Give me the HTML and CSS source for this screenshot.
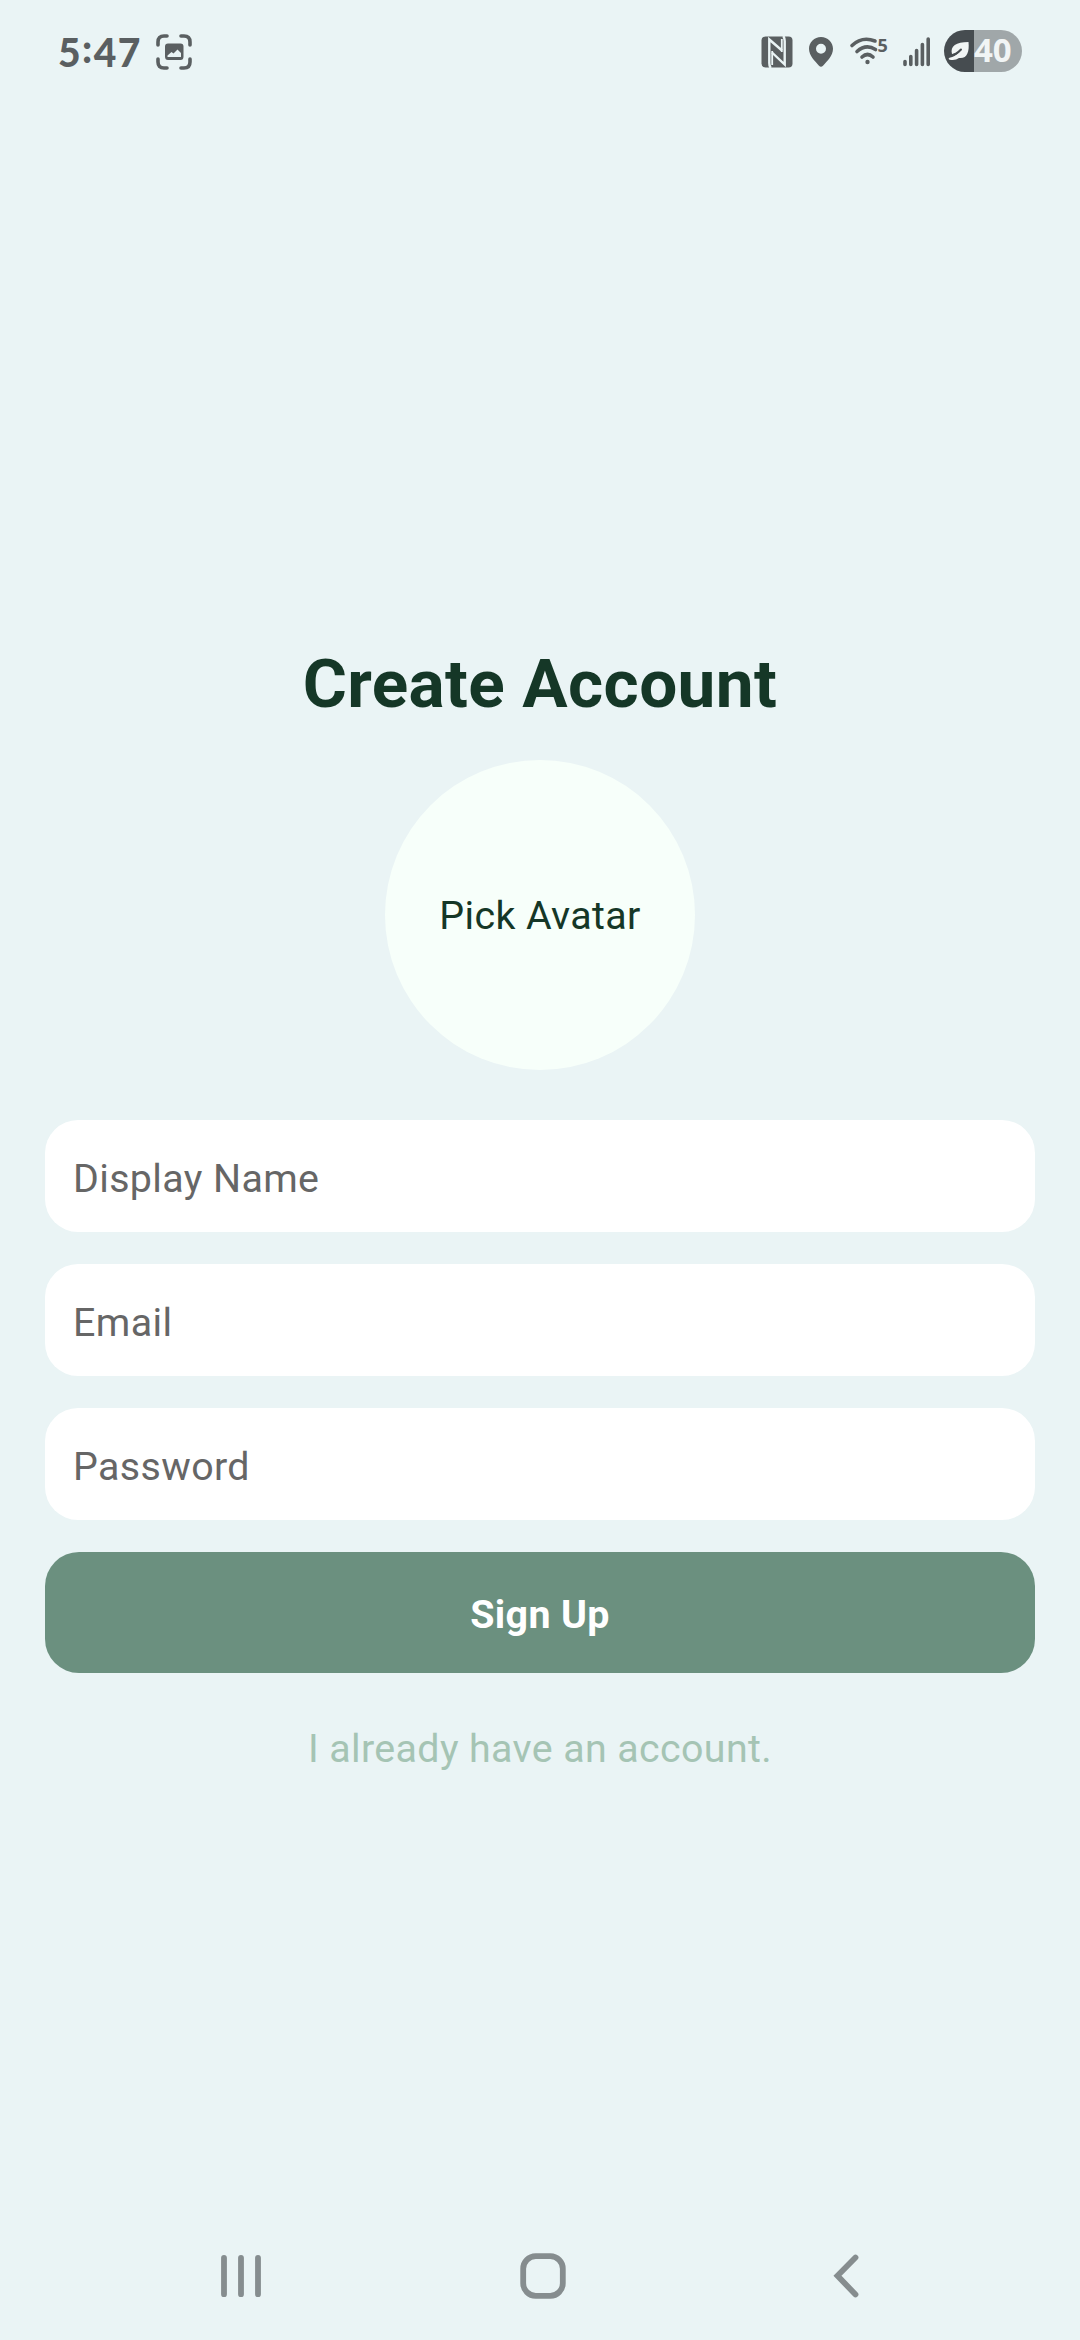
FILE: index.html
```html
<!DOCTYPE html>
<html lang="en">
<head>
<meta charset="utf-8">
<title>Create Account</title>
<link rel="stylesheet" href="styles.css">
</head>
<body>
<div class="screen">
  <header class="status">
    <div class="status-left">
      <span class="time">5<span class="colon">:</span>47</span>
      <svg class="icon-capture" width="36" height="36" viewBox="0 0 36 36">
        <path class="line" d="M2 11V8Q2 2 8 2H11M25 2H28Q34 2 34 8V11M34 25V28Q34 34 28 34H25M11 34H8Q2 34 2 28V25"/>
        <path class="solid" fill-rule="evenodd" d="M12 9.500H24.500Q27.500 9.500 27.500 12.500V22.500Q27.500 26 24.500 26H12Q9 26 9 22.500V12.500Q9 9.500 12 9.500ZM11.500 23H25V19L21.500 15.500L17.500 19.500L15.500 18L11.500 21.500Z"/>
      </svg>
    </div>
    <div class="status-right">
      <svg width="32" height="32" viewBox="0 0 32 32">
        <rect class="solid" x="0.500" y="0.500" width="31" height="31" rx="4"/>
        <path class="cut" d="M9.700 32Q8.300 30 8.300 27V3.500L21 14.500M22.300 0Q23.700 2 23.700 5V28.500L11 16.500"/>
        <path class="cut cut-thin" d="M11.200 29V15M20.800 3V16"/>
      </svg>
      <svg width="24" height="30" viewBox="0 0 24 30">
        <path class="solid" fill-rule="evenodd" d="M12 0C5.300 0 0 5.200 0 11.800C0 19 6 24 10 28.800Q12 30.600 14 28.800C18 24 24 19 24 11.800C24 5.200 18.700 0 12 0ZM12 6.700A5 5 0 1 1 12 16.700A5 5 0 1 1 12 6.700Z"/>
      </svg>
      <svg class="icon-wifi" width="40" height="30" viewBox="0 0 40 30">
        <path class="line" d="M2 8.500Q12 -1 25 4M7 14.500Q16 6.500 25.500 12.500M12 20Q17.500 15 23 20"/>
        <circle class="solid" cx="17.500" cy="25" r="2.200"/>
        <text class="wifi-gen" x="27.500" y="15">5</text>
      </svg>
      <svg class="icon-signal" width="28" height="30" viewBox="0 0 28 30">
        <path class="bars" d="M2 24.500V27.500M7.800 19.500V27.500M13.600 13.500V27.500M19.400 7.500V27.500M25.200 2V27.500"/>
      </svg>
      <div class="battery">
        <svg class="leaf" width="22" height="20" viewBox="0 0 22 20">
          <path class="leaf-fill" d="M4 13C2 5 8 1 20.500 1C21.500 11 19 18 11 17Q7 20 1 18.500Q0 17.500 1.500 16.800Q7 16 12 10Q8 13 4 13Z"/>
          <path class="leaf-vein" d="M2.500 14.500Q8 14 13 8.500"/>
        </svg>
        <span class="level">40</span>
      </div>
    </div>
  </header>

  <main class="signup">
    <h1 class="title">Create Account</h1>
    <button class="avatar" type="button">Pick Avatar</button>
    <form class="form">
      <input class="field" type="text" placeholder="Display Name" aria-label="Display Name">
      <input class="field" type="email" placeholder="Email" aria-label="Email">
      <input class="field" type="password" placeholder="Password" aria-label="Password">
      <button class="submit" type="button">Sign Up</button>
    </form>
    <a class="login-link">I already have an account.</a>
  </main>

  <nav class="nav">
    <svg width="42" height="46" viewBox="0 0 42 46"><path class="nav-line" d="M4 4.800V41.200M21 4.800V41.200M38 4.800V41.200"/></svg>
    <svg class="nav-home" width="46" height="46" viewBox="0 0 46 46"><rect class="nav-line" x="3.200" y="3.200" width="39.600" height="39.600" rx="12.500"/></svg>
    <svg class="nav-back" width="26" height="46" viewBox="0 0 26 46"><path class="nav-line" d="M22.500 4.500L4.500 22.800L22.500 41.500"/></svg>
  </nav>
</div>
</body>
</html>
```
FILE: styles.css
```css
* { box-sizing: border-box; }
body { margin: 0; background: #eaf4f5; }
svg { display: block; fill: none; flex: none; }

.screen {
  width: 1080px;
  height: 2340px;
  display: flex;
  flex-direction: column;
  background: #eaf4f5;
  font-family: Roboto, sans-serif;
  font-size: 39.375px;
  letter-spacing: 0.38px;
  overflow: hidden;
}

/* Status bar */
.status {
  height: 104px;
  padding: 0 58px;
  display: flex;
  justify-content: space-between;
}
.status-left, .status-right { height: 103px; display: flex; align-items: center; }
.time {
  width: 98px;
  padding-bottom: 2px;
  font: 900 39px/40px Lato, sans-serif;
  letter-spacing: 1.4px;
  color: #5a5f61;
}
.colon { vertical-align: 4px; line-height: 1; }
.solid { fill: #5a5f61; }
.line { stroke: #5a5f61; stroke-width: 3.6; stroke-linecap: round; }
.cut { stroke: #eaf4f5; stroke-width: 2.4; }
.cut-thin { stroke-width: 1.8; }
.bars { stroke: #5a5f61; stroke-width: 3.6; stroke-linecap: round; }
.wifi-gen { fill: #5a5f61; font: 700 18px "Open Sans", sans-serif; letter-spacing: 0; }
.icon-wifi, .icon-signal { overflow: visible; }
.status-right > :nth-child(2) { margin-left: 16px; }
.icon-wifi { margin-left: 17px; }
.icon-signal { margin-left: 13px; }
.battery {
  width: 78px;
  height: 42px;
  margin: 0 0 1px 13px;
  padding-left: 4px;
  display: flex;
  align-items: center;
  border-radius: 21px;
  background: linear-gradient(90deg, #464c50 30.5px, #a0a7a9 30.5px);
}
.leaf-fill { fill: #f1f5f5; }
.leaf-vein { stroke: #464c50; stroke-width: 2; stroke-linecap: round; }
.level {
  margin-left: 4px;
  padding-bottom: 3px;
  font: 700 33px/42px "Open Sans", sans-serif;
  letter-spacing: 0;
  color: #f1f5f5;
}

/* Sign-up form */
.signup {
  flex: 1;
  padding: 540px 45px 0;
  display: flex;
  flex-direction: column;
  align-items: center;
}
.title {
  margin: 0;
  font-size: 67.5px;
  line-height: 80px;
  font-weight: 700;
  color: #153727;
}
.avatar {
  width: 310px;
  height: 310px;
  margin-top: 36px;
  padding: 0;
  border: 0;
  border-radius: 50%;
  background: #f7fffa;
  font: inherit;
  letter-spacing: inherit;
  color: #153727;
}
.form {
  width: 100%;
  margin-top: 50px;
  display: flex;
  flex-direction: column;
  gap: 32px;
}
.field {
  width: 100%;
  height: 112px;
  padding: 4px 28px 0;
  border: 0;
  border-radius: 33px;
  background: #fff;
  font: inherit;
  letter-spacing: inherit;
}
.field::placeholder { color: #666; opacity: 1; }
.submit {
  height: 121px;
  padding: 4px 0 0;
  border: 0;
  border-radius: 34px;
  background: #6b907f;
  font: inherit;
  font-weight: 700;
  letter-spacing: inherit;
  color: #fff;
}
.login-link {
  margin-top: 53px;
  line-height: 46px;
  color: #a5c4b4;
}

/* System navigation */
.nav {
  height: 129px;
  padding-left: 220px;
  display: flex;
  align-items: center;
}
.nav-home { margin-left: 258px; }
.nav-back { margin-left: 267px; }
.nav-line { stroke: #868d8f; stroke-width: 5.8; stroke-linecap: round; }
```
